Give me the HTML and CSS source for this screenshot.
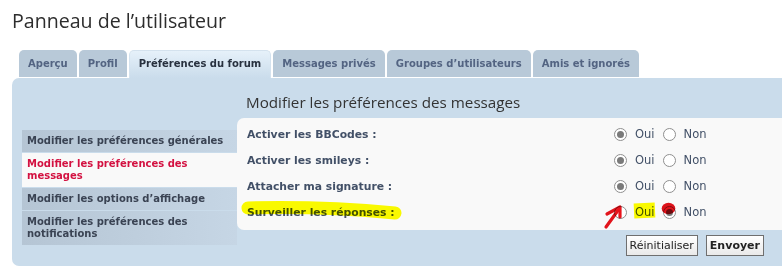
FILE: index.html
```html
<!DOCTYPE html>
<html lang="fr">
<head>
<meta charset="utf-8">
<title>Panneau de l’utilisateur</title>
<link rel="stylesheet" href="styles.css">
</head>
<body>
<div class="page">
  <h2 class="title">Panneau de l’utilisateur</h2>
  <ul class="tabs">
    <li class="tab">Aperçu</li>
    <li class="tab">Profil</li>
    <li class="tab active">Préférences du forum</li>
    <li class="tab">Messages privés</li>
    <li class="tab">Groupes d’utilisateurs</li>
    <li class="tab">Amis et ignorés</li>
  </ul>
  <div class="panel">
    <h3 class="heading">Modifier les préférences des messages</h3>
    <div class="body">
      <ul class="menu">
        <li class="mitem">Modifier les préférences générales</li>
        <li class="mitem current">Modifier les préférences des messages</li>
        <li class="mitem">Modifier les options d’affichage</li>
        <li class="mitem">Modifier les préférences des notifications</li>
      </ul>
      <div class="main">
        <div class="content">
          <div class="row"><span class="label">Activer les BBCodes :</span><span class="opts"><span class="radio on"></span><span class="opt">Oui</span><span class="radio"></span><span class="opt">Non</span></span></div>
          <div class="row"><span class="label">Activer les smileys :</span><span class="opts"><span class="radio on"></span><span class="opt">Oui</span><span class="radio"></span><span class="opt">Non</span></span></div>
          <div class="row"><span class="label">Attacher ma signature :</span><span class="opts"><span class="radio on"></span><span class="opt">Oui</span><span class="radio"></span><span class="opt">Non</span></span></div>
          <div class="row"><span class="label">Surveiller les réponses :</span><span class="opts"><span class="radio"></span><span class="opt">Oui</span><span class="radio on"></span><span class="opt">Non</span></span></div>
        </div>
        <div class="buttons">
          <button class="btn">Réinitialiser</button>
          <button class="btn primary">Envoyer</button>
        </div>
      </div>
    </div>
  </div>
  <svg class="marks" width="782" height="270" viewBox="0 0 782 270">
    <path d="M248,208 Q320,206 395,213" stroke="#ffff00" stroke-width="13" fill="none" stroke-linecap="round"/>
    <path d="M634,211 L655,210" stroke="#ffff00" stroke-width="15" fill="none" stroke-linecap="butt"/>
    <path d="M606,227 L619,209" stroke="#e8141c" stroke-width="3.2" fill="none" stroke-linecap="round"/>
    <path d="M607,214 L620,207 L620,217" stroke="#e8141c" stroke-width="3.2" fill="none" stroke-linecap="round" stroke-linejoin="round"/>
    <ellipse cx="668.5" cy="208.5" rx="6.8" ry="5.8" fill="#e3131b"/>
  </svg>
</div>
</body>
</html>
```
FILE: styles.css
```css
* { box-sizing: border-box; }
html, body { margin: 0; padding: 0; background: #fff; }
.page { position: relative; width: 782px; height: 270px; overflow: hidden; font-family: "DejaVu Sans", Verdana, sans-serif; }
.title { margin: 0; padding: 9px 0 0 12px; height: 50px; font-family: "Open Sans", sans-serif; font-weight: normal; font-size: 19.6px; line-height: 24px; color: #2d2d2d; }
.tabs { list-style: none; margin: 0 0 0 19px; padding: 0; display: flex; gap: 2px; height: 28px; }
.tab { height: 27px; padding: 0 9px; background: #b8c9d8; border-radius: 5px 5px 0 0; font-size: 10px; font-weight: bold; line-height: 27px; color: #536482; white-space: nowrap; }
.tab.active { height: 28px; background: linear-gradient(#e6f1fa, #cadceb); color: #28313f; border: 1px solid #d4e2ee; border-bottom: 0; line-height: 25px; }
.panel { margin-left: 12px; background: #cadceb; border-radius: 7px 0 0 7px; height: 188px; padding-top: 12px; }
.heading { margin: 0 0 0 234px; font-family: "Open Sans", sans-serif; font-weight: normal; font-size: 15.2px; line-height: 24px; height: 28px; color: #333; }
.body { display: flex; }
.menu { list-style: none; margin: 12px 0 0 10px; padding: 0; width: 215px; display: flex; flex-direction: column; gap: 1px; }
.mitem { padding: 5px 5px; font-size: 10px; font-weight: bold; line-height: 12px; color: #3a4353; background: linear-gradient(to right, #b5c5d4, #c6d6e5); }
.mitem.current { background: #f9f9f9; color: #d31141; }
.main { flex: 1; display: flex; flex-direction: column; }
.content { background: #f9f9f9; border-radius: 7px 0 0 7px; padding: 3px 0 5px 10px; }
.row { display: flex; align-items: center; height: 26px; }
.label { width: 367px; font-size: 10.8px; font-weight: bold; color: #425067; }
.opts { display: flex; align-items: center; }
.radio { width: 13px; height: 13px; border: 1px solid #8f8f8f; border-radius: 50%; background: #fff; position: relative; }
.radio.on::after { content: ""; position: absolute; left: 2px; top: 2px; width: 7px; height: 7px; border-radius: 50%; background: #7a7a7a; }
.opt { font-size: 11.5px; color: #425067; margin: 0 8px 0 8px; }
.buttons { display: flex; justify-content: flex-end; gap: 8px; padding: 5px 18px 0 0; }
.btn { height: 21px; padding: 0 3px; font-family: "DejaVu Sans", Verdana, sans-serif; font-size: 11px; color: #222; background: linear-gradient(#ffffff, #e9e9e9); border: 1px solid #6f6f6f; border-radius: 0; }
.btn.primary { font-weight: bold; }
.marks { position: absolute; left: 0; top: 0; pointer-events: none; mix-blend-mode: multiply; }
```
